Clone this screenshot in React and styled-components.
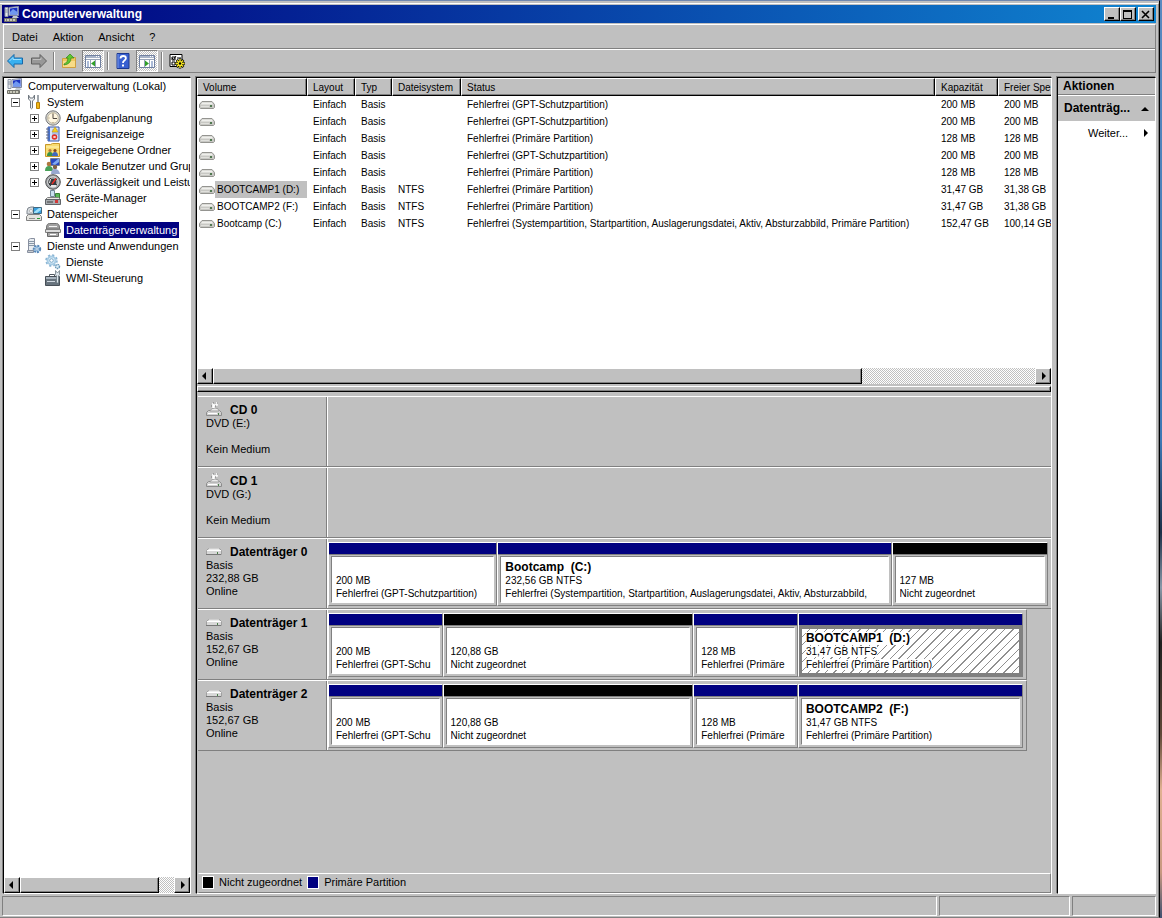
import React, { useState } from "react";
import styled, { createGlobalStyle, css } from "styled-components";

const FACE = "#c0c0c0";
const SHADOW = "#808080";
const LIGHT = "#ffffff";
const NAVY = "#000080";
const BLACK = "#000000";
const FONT = `"Liberation Sans", Arial, sans-serif`;

const dither = css`
  background: repeating-conic-gradient(${FACE} 0% 25%, ${LIGHT} 0% 50%) 0 0 / 2px 2px;
`;

const raised = css`
  border: 1px solid;
  border-color: ${LIGHT} ${BLACK} ${BLACK} ${LIGHT};
  box-shadow: inset -1px -1px 0 ${SHADOW};
`;

const GlobalStyle = createGlobalStyle`
  * { box-sizing: border-box; }
  body {
    margin: 0;
    font: 11px/13px ${FONT};
    color: ${BLACK};
    background: linear-gradient(#5a8ac0 0%, #3e78b4 48%, #1c3048 58%, #8a98a8 64%, #202020 70%, #604838 80%, #e0b090 86%, #c89880 95%, #405070 100%);
  }
  button { font: inherit; color: inherit; padding: 0; }
`;

const Window = styled.div`
  display: flex;
  flex-direction: column;
  height: 100vh;
  min-height: 600px;
  margin-right: 2px;
  border-top: 1px solid #7088b0;
  border-right: 1px solid ${BLACK};
  border-bottom: 1px solid ${SHADOW};
  background: ${FACE};
`;

const Frame = styled.div`
  display: flex;
  flex-direction: column;
  flex: 1;
  min-height: 0;
  margin-top: 2px;
  padding: 1px 2px 1px 2px;
  border-top: 1px solid ${LIGHT};
  border-right: 1px solid ${SHADOW};
`;

const TitleBar = styled.header`
  display: flex;
  align-items: center;
  gap: 2px;
  height: 18px;
  padding: 0 2px;
  color: ${LIGHT};
  background: linear-gradient(90deg, #00007f, #1084d0);
`;

const Title = styled.h1`
  flex: 1;
  margin: 0;
  font-size: 12px;
`;

const CaptionButton = styled.button`
  ${raised}
  display: grid;
  place-items: center;
  width: 16px;
  height: 14px;
  margin-left: ${p => (p.$spaced ? "0" : "-2px")};
  background: ${FACE};
`;

const Bars = styled.div`
  margin: 1px 0 3px 1px;
  border: 1px solid;
  border-color: ${LIGHT} ${SHADOW} ${SHADOW} ${LIGHT};
`;

const MenuBar = styled.nav`
  display: flex;
  align-items: center;
  gap: 15px;
  height: 24px;
  padding: 1px 0 0 8px;
  border-bottom: 1px solid ${SHADOW};

  button {
    border: 0;
    background: none;
  }
`;

const ToolBar = styled.div`
  display: flex;
  align-items: center;
  gap: 2px;
  height: 23px;
  border-top: 1px solid ${LIGHT};
`;

const ToolButton = styled.button`
  display: grid;
  place-items: center;
  width: 22px;
  height: 22px;
  border: 1px solid transparent;
  background: none;
  ${p =>
    p.$pressed &&
    css`
      ${dither}
      border-color: ${SHADOW} ${LIGHT} ${LIGHT} ${SHADOW};
    `}
`;

const Separator = styled.span`
  width: 2px;
  height: 18px;
  margin: 0 1px;
  border-left: 1px solid ${SHADOW};
  border-right: 1px solid ${LIGHT};
`;

const Panes = styled.div`
  display: flex;
  flex: 1;
  gap: 5px;
  min-height: 0;
  padding: 1px 0 0 1px;
`;

const Pane = styled.section`
  display: flex;
  flex-direction: column;
  min-width: 0;
  border: 1px solid;
  border-color: ${BLACK} ${LIGHT} ${LIGHT} ${BLACK};
  box-shadow: -1px -1px 0 ${SHADOW};
  background: ${LIGHT};
`;

const TreePane = styled(Pane)`
  flex: 0 0 188px;
`;

const MainPane = styled(Pane)`
  flex: 1;
  background: ${FACE};
`;

const ActionPane = styled(Pane)`
  flex: 0 0 99px;
`;

const Tree = styled.ul`
  flex: 1;
  margin: 0;
  padding: 0;
  overflow: hidden;
  list-style: none;
`;

const treeIndent = ["3px", "7px", "26px"];

const TreeRow = styled.li`
  display: flex;
  align-items: center;
  height: 16px;
  padding-left: ${p => treeIndent[p.$level]};
  white-space: nowrap;

  svg {
    flex: none;
  }
`;

const Expander = styled.button`
  flex: none;
  display: grid;
  place-items: center;
  width: 9px;
  height: 9px;
  margin-right: 6px;
  border: 1px solid ${SHADOW};
  background: ${LIGHT};
`;

const NoExpander = styled.span`
  flex: none;
  width: 15px;
`;

const TreeLabel = styled.button`
  height: 16px;
  margin-left: 3px;
  padding: 0 2px;
  border: 0;
  color: ${p => (p.$selected ? LIGHT : BLACK)};
  background: ${p => (p.$selected ? NAVY : "none")};
`;

const ScrollBar = styled.div`
  ${dither}
  flex: none;
  display: flex;
  height: 16px;
`;

const ScrollButton = styled.button`
  ${raised}
  display: grid;
  place-items: center;
  width: 16px;
  background: ${FACE};
`;

const ScrollTrack = styled.div`
  flex: 1;
`;

const ScrollThumb = styled.div`
  ${raised}
  width: ${p => p.$size};
  height: 100%;
  background: ${FACE};
`;

const VolumeArea = styled.div`
  flex: 0 0 290px;
  overflow: hidden;
  background: ${LIGHT};
`;

const VolumeTable = styled.table`
  width: 891px;
  table-layout: fixed;
  border-collapse: separate;
  border-spacing: 0;
`;

const ColumnHead = styled.th`
  width: ${p => p.$width}px;
  height: 18px;
  padding: 0 0 0 5px;
  border: 1px solid;
  border-color: ${LIGHT} ${BLACK} ${BLACK} ${LIGHT};
  box-shadow: inset -1px -1px 0 ${SHADOW};
  background: ${FACE};
  font-size: 10px;
  font-weight: 400;
  text-align: left;
`;

const Cell = styled.td`
  height: 17px;
  padding: 0 0 0 6px;
  overflow: hidden;
  font-size: 10px;
  white-space: nowrap;
`;

const NameCell = styled(Cell)`
  padding-left: 2px;
`;

const VolumeName = styled.div`
  display: flex;
  align-items: center;
  height: 17px;

  span {
    flex: 1;
    padding-left: 2px;
    line-height: 17px;
    background: ${p => (p.$selected ? FACE : "none")};
  }
`;

const Splitter = styled.div`
  ${raised}
  flex: none;
  height: 6px;
  margin: 2px 0 4px;
`;

const Disks = styled.div`
  flex: 1;
  min-height: 0;
  margin-left: 1px;
  overflow: hidden;
`;

const DiskRow = styled.article`
  display: flex;
  height: 71px;
  width: ${p => (p.$short ? "calc(100% - 24px)" : "100%")};
  border-top: 1px solid ${LIGHT};
  border-bottom: 1px solid ${SHADOW};
  border-right: ${p => (p.$short ? `1px solid ${SHADOW}` : "0")};
`;

const DiskInfo = styled.div`
  flex: 0 0 129px;
  padding: 6px 0 0 8px;
  border-right: 1px solid ${SHADOW};
`;

const DiskTitle = styled.h2`
  display: flex;
  align-items: center;
  gap: 8px;
  height: 14px;
  margin: 0;
  font-size: 12px;
`;

const Line = styled.p`
  min-height: 13px;
  margin: 0;
`;

const Partitions = styled.div`
  display: flex;
  flex: 1;
  min-width: 0;
  padding: 3px 3px 2px 0;
  border-left: 1px solid ${LIGHT};
`;

const Partition = styled.div`
  display: flex;
  flex-direction: column;
  flex: ${p => p.$share} 0 0;
  min-width: 0;
  border: 1px solid;
  border-color: ${LIGHT} ${SHADOW} ${SHADOW} ${LIGHT};
`;

const PartitionBar = styled.div`
  height: 12px;
  border-bottom: 1px solid ${SHADOW};
  background: ${p => (p.$free ? BLACK : NAVY)};
`;

const PartitionBody = styled.div`
  flex: 1;
  min-height: 0;
  margin: ${p => (p.$selected ? "0" : "1px 2px 2px 2px")};
  padding: ${p => (p.$selected ? "3px 0 0 4px" : "4px 4px 0 4px")};
  overflow: hidden;
  font-size: 10px;
  white-space: nowrap;
  border: 1px solid;
  border-color: ${SHADOW} ${LIGHT} ${LIGHT} ${SHADOW};
  background: ${LIGHT};
  ${p =>
    p.$selected &&
    css`
      border: 3px solid ${SHADOW};
      background: repeating-linear-gradient(135deg, ${LIGHT} 0 5px, #909090 5px 6px);
    `}

  p {
    overflow: hidden;
  }

  span {
    background: ${LIGHT};
  }
`;

const PartitionName = styled(Line)`
  font-size: 12px;
  font-weight: 700;
  white-space: pre;
`;

const Legend = styled.footer`
  flex: none;
  display: flex;
  align-items: center;
  gap: 5px;
  height: 20px;
  margin-left: 1px;
  padding: 0 0 1px 3px;
  border: 1px solid;
  border-color: ${LIGHT} ${SHADOW} ${SHADOW} ${FACE};
`;

const Swatch = styled.i`
  width: 12px;
  height: 13px;
  border: 1px solid ${LIGHT};
  background: ${p => p.$color};
`;

const ActionHeading = styled.h2`
  height: 17px;
  margin: 0;
  padding-left: 5px;
  border-bottom: 1px solid ${SHADOW};
  font-size: 12px;
  line-height: 17px;
  background: ${FACE};
`;

const ActionGroup = styled.button`
  display: flex;
  align-items: center;
  justify-content: space-between;
  height: 25px;
  margin-top: 1px;
  padding: 0 6px;
  border: 0;
  font-size: 12px;
  font-weight: 700;
  background: ${FACE};
`;

const ActionItem = styled.button`
  display: flex;
  align-items: center;
  justify-content: space-between;
  height: 24px;
  padding: 0 6px 0 30px;
  border: 0;
  background: none;
`;

const StatusBar = styled.footer`
  display: grid;
  grid-template-columns: 1fr 131px 84px;
  gap: 2px;
  height: 20px;
  margin-top: 2px;

  span {
    border: 1px solid;
    border-color: ${SHADOW} ${LIGHT} ${LIGHT} ${SHADOW};
  }
`;

const Svg = ({ children }) => (
  <svg width="16" height="16" viewBox="0 0 16 16" aria-hidden="true">
    {children}
  </svg>
);

const ComputerIcon = () => (
  <Svg>
    <path d="M1 1.500h3v9H1z" fill="#e4e8ec" stroke="#9098a8" />
    <path d="M1 4h3M1 6h3" stroke="#8890a0" />
    <path d="M5 1.500L14.500 .500v9L5 9.500z" fill="#e8ecf4" stroke="#8088a0" />
    <path d="M6 2.500l7.500-1v7H6z" fill="#1c34c0" />
    <path d="M6 8.500V6l3-3 4.500 3v2.500z" fill="#7098f0" />
    <path d="M9 10h4l2 2H8z" fill="#c0c8d4" />
    <path d="M.5 12.500h12v3H.5z" fill="#c8c8b8" stroke="#707068" />
    <path d="M2 14h1M5 14h1M8 14h1M11 14h1" stroke="#383838" />
  </Svg>
);

const ToolsIcon = () => (
  <Svg>
    <path d="M2.500 1v4l2 2v7q1 1.500 2 0V7l2-2V1L7 4H4z" fill="#f0f2f4" stroke="#707880" />
    <path d="M12 1v7" stroke="#808890" strokeWidth="1.500" />
    <path d="M10.500 8.500h3v6h-3z" fill="#f0b818" stroke="#b88008" />
  </Svg>
);

const ClockIcon = () => (
  <Svg>
    <circle cx="8" cy="8" r="7.200" fill="#d8d8d4" stroke="#787878" />
    <circle cx="8" cy="8" r="5.300" fill="#fff6e0" stroke="#c0b8a0" />
    <path d="M8 4v4.500h4" fill="none" stroke="#504840" />
    <path d="M8 3v1M8 12v1M3.500 8h1" stroke="#a09070" />
  </Svg>
);

const EventIcon = () => (
  <Svg>
    <path d="M3 1h11v14H3z" fill="#d8e4f8" stroke="#3858a8" />
    <path d="M3 1h2v14H3z" fill="#4870c8" />
    <path d="M1 3h3M1 6h3M1 9h3M1 12h3" stroke="#606880" />
    <path d="M7 4h6M7 6h6M7 8h6" stroke="#88a0d0" />
    <path d="M10 1l3 5H7z" fill="#f8d020" stroke="#b89010" strokeWidth=".5" />
    <circle cx="9.500" cy="11" r="2.800" fill="#e03028" />
    <path d="M8.500 10l2 2m0-2l-2 2" stroke="#fff" />
  </Svg>
);

const SharedFolderIcon = () => (
  <Svg>
    <path d="M.5 2.500h5l2-1h7v13H.5z" fill="#f8dc70" stroke="#c89828" />
    <path d="M1 5h13" stroke="#fff4b8" />
    <circle cx="5" cy="8.500" r="1.600" fill="#b87838" />
    <path d="M2 14q0-4 3-4t3 4z" fill="#389048" />
    <circle cx="10" cy="8.500" r="1.600" fill="#804820" />
    <path d="M7 14q0-4 3-4t3 4z" fill="#4068c0" />
  </Svg>
);

const UsersIcon = () => (
  <Svg>
    <path d="M5.500 .5h9v7h-9z" fill="#d8dce4" stroke="#788090" />
    <path d="M6 1h8v6H6z" fill="#2848c0" />
    <path d="M7 6l6-5h1v3l-4 3z" fill="#80a8f0" />
    <circle cx="4" cy="6" r="2.300" fill="#b07840" />
    <path d="M0 13q0-5 4-5t4 5z" fill="#48a058" />
    <circle cx="10" cy="9" r="2.200" fill="#806048" />
    <path d="M6 16q0-5 4-5t5 5z" fill="#98a8d0" />
  </Svg>
);

const GaugeIcon = () => (
  <Svg>
    <circle cx="8" cy="8" r="7.300" fill="#a0a4a8" stroke="#505050" />
    <circle cx="8" cy="8" r="5.300" fill="#383c40" stroke="#e0e0e0" />
    <path d="M4.500 9l1-4M6 4h4M12 6v4" stroke="#f0f0f0" />
    <path d="M11 4.500L7 10" stroke="#e83028" strokeWidth="1.500" />
    <path d="M6 11h5v2H6z" fill="#e8e8e8" />
  </Svg>
);

const DeviceIcon = () => (
  <Svg>
    <path d="M5.500 .5h4v6h-4z" fill="#c8e0f0" stroke="#708898" />
    <path d="M10.500 3.500h4v5h-4z" fill="#58b858" stroke="#388038" />
    <path d="M.5 9.500l2-2h11l2 2z" fill="#e8e8e4" stroke="#808080" />
    <path d="M.5 9.500h15v5H.5z" fill="#a8acb0" stroke="#606468" />
    <path d="M2 12h6" stroke="#404040" />
    <path d="M10 10h3v3h-3z" fill="#d03838" />
  </Svg>
);

const StorageIcon = () => (
  <Svg>
    <path d="M1 5q0-4 4-4h3v7H1z" fill="#d8dce0" stroke="#808890" />
    <circle cx="5" cy="5" r="1.500" fill="#fff" stroke="#888" strokeWidth=".5" />
    <path d="M7.500 1.500h8v6h-8z" fill="#38a0e0" stroke="#406880" />
    <path d="M8 6l5-4h2v2l-4 3H8z" fill="#a0e0f8" />
    <path d="M.5 10.500l2-2h11l2 2v4H.5z" fill="#e4e4e0" stroke="#808080" />
    <path d="M3 12.500h6" stroke="#909090" />
    <path d="M11 12.500h3" stroke="#289838" />
  </Svg>
);

const DiskManagementIcon = () => (
  <Svg>
    <path d="M1.500 6q0-4.500 3-4.500h7q3 0 3 4.500v1h-13z" fill="#a0a0a0" stroke="#707070" />
    <path d="M4 4.500h8" stroke="#f4f4f4" />
    <path d="M.5 7.500h15v3H.5z" fill="#dcdcdc" stroke="#808080" />
    <path d="M2.500 10.500h11v4h-11z" fill="#a8a8a8" stroke="#686868" />
    <path d="M5 12.500h6" stroke="#fff" />
  </Svg>
);

const ServicesAppsIcon = () => (
  <Svg>
    <path d="M2.500 1.500l2-1h4v12h-6z" fill="#e8ecf0" stroke="#8890a0" />
    <path d="M3 3.500h5M3 5.500h5M3 7.500h5" stroke="#8898a8" />
    <path d="M1.500 12.500h6v2h-6z" fill="#c8ccd0" stroke="#8890a0" />
    <circle cx="11" cy="11" r="3.200" fill="#b8d8f0" stroke="#5888b8" strokeWidth="2" strokeDasharray="2 1" />
    <circle cx="11" cy="11" r="1.300" fill="#fff" stroke="#5888b8" strokeWidth=".7" />
  </Svg>
);

const ServicesIcon = () => (
  <Svg>
    <circle cx="6.500" cy="6.500" r="4" fill="#e0f0fa" stroke="#a8cce4" strokeWidth="2" />
    <circle cx="6.500" cy="6.500" r="5.500" fill="none" stroke="#88b4d4" strokeWidth="1.500" strokeDasharray="2.200 2.120" />
    <circle cx="6.500" cy="6.500" r="1.800" fill="#fff" stroke="#78a8c8" />
    <circle cx="12.500" cy="12.500" r="2" fill="#e0f0fa" stroke="#6898b8" strokeWidth="1.500" strokeDasharray="1.500 .6" />
  </Svg>
);

const WmiIcon = () => (
  <Svg>
    <path d="M4.500 6V4.500h5v2" fill="none" stroke="#505860" />
    <path d="M.5 6.500h14v9H.5z" fill="#68747e" stroke="#485058" />
    <path d="M1 7h13v2H1z" fill="#a8b4be" />
    <path d="M2 11.500h8" stroke="#d0d8e0" />
    <path d="M10.500 .5v4l1 1.500v7h2V6l1-1.500v-4l-2 2.500z" fill="#dce4ea" stroke="#607078" strokeWidth=".7" />
  </Svg>
);

const DriveIcon = () => (
  <Svg>
    <path d="M.5 7.500L3 4.500h10l2.500 3v3l-1 1h-13l-1-1z" fill="#c8c8c4" stroke="#949490" />
    <path d="M3 5.500h10l1 2H2z" fill="#efefec" />
    <path d="M2 9.500h8" stroke="#e0e0dc" />
    <path d="M11 8h2v2h-2z" fill="#507850" />
  </Svg>
);

const SmallDriveIcon = () => (
  <Svg>
    <path d="M.5 6.500l2-2h11l2 2v4H.5z" fill="#d8d8d8" stroke="#a0a0a0" />
    <path d="M1 6.500h14M3 5h10" stroke="#fff" />
    <path d="M0 10.500h15" stroke="#787878" />
    <path d="M11.500 8v2" stroke="#488048" />
  </Svg>
);

const OpticalIcon = () => (
  <Svg>
    <path d="M.5 10.500l2-2h11l2 2v3H.5z" fill="#d0d0d0" stroke="#8c8c8c" />
    <path d="M2 11.500h9" stroke="#fff" />
    <path d="M4 9q1-3 5-3t4 3z" fill="#ececec" stroke="#a0a0a0" />
    <path d="M7 1v5M8 6V3h3V0" fill="none" stroke="#fff" strokeWidth="1.500" />
    <path d="M7 1h1M11 1h1M9 4h1M5 4h1" stroke="#707070" />
    <path d="M12.500 11v2" stroke="#488048" />
  </Svg>
);

const ArrowIcon = ({ forward }) => (
  <Svg>
    <path
      d={forward ? "M15.500 8L9 1.500v3.500H.5v6H9v3.500z" : "M.5 8L7 1.500v3.500h8.500v6H7v3.500z"}
      fill={forward ? "#989898" : "#38b0f0"}
      stroke={forward ? "#606060" : "#1868a8"}
    />
    <path
      d={forward ? "M2 6.500h8V4.500" : "M2.500 8L6 4.500v2h8"}
      fill="none"
      stroke={forward ? "#c0c0c0" : "#a0e0ff"}
    />
  </Svg>
);

const FolderUpIcon = () => (
  <Svg>
    <path d="M1.500 5.500h5l1-1h7v10h-13z" fill="#f0c860" stroke="#d0a040" />
    <path d="M2 8h12v6H2z" fill="#f8dc88" />
    <path d="M3 11q4-1 4-6H5l4-4 4 4h-3q0 6-7 7z" fill="#60c830" stroke="#308818" strokeWidth=".7" />
  </Svg>
);

const PaneIcon = ({ right }) => (
  <Svg>
    <path d="M.5 2.500h15v12H.5z" fill="#fff" stroke="#7080a0" />
    <path d="M1 4h14" stroke="#a8b4c8" strokeWidth="2" />
    <path d="M11 3.500h1M13 3.500h1" stroke="#fff" />
    <path d="M1 6.500h14M5.500 7v7M10.500 7v7" stroke="#98a4b8" />
    <path d={right ? "M12 9h2M12 11h2M12 13h2" : "M2 9h2M2 11h2M2 13h2"} stroke="#5878b0" />
    <path d={right ? "M6 7.500l4 3-4 3z" : "M10 7.500l-4 3 4 3z"} fill="#30a028" />
  </Svg>
);

const HelpIcon = () => (
  <Svg>
    <path d="M2 .5h12v15H2z" fill="#3860d0" stroke="#1c3890" />
    <path d="M3 1v14" stroke="#7898e8" />
    <path d="M5.500 5.500q0-2.500 2.700-2.500t2.700 2.300q0 1.200-1.500 2.100T8 10" fill="none" stroke="#fff" strokeWidth="1.800" />
    <path d="M7 11.500h2v2H7z" fill="#fff" />
  </Svg>
);

const SettingsIcon = () => (
  <Svg>
    <path d="M1 1.500h12v12H1z" fill="#fff" stroke="#000" />
    <path d="M3 4h3v3H3zM3 9h3v3H3z" fill="#fff" stroke="#000" />
    <path d="M3 5l1.500 1.500L7 3M8 5h4M8 10h2" fill="none" stroke="#000" />
    <path d="M11 5.500v10M6 10.500h10M7.500 7l7 7M14.500 7l-7 7" stroke="#000" strokeWidth="2.500" />
    <path d="M11 6v9M6.500 10.500h9M8 7.500l6 6M14 7.500l-6 6" stroke="#f8e820" strokeWidth="1.500" />
    <circle cx="11" cy="10.500" r="1.200" fill="#000" />
  </Svg>
);

const Triangle = ({ dir }) => {
  const paths = {
    left: "M5 0v8L1 4z",
    right: "M3 0v8l4-4z",
    up: "M0 6h8L4 2z"
  };
  return (
    <svg width="8" height="8" viewBox="0 0 8 8" aria-hidden="true">
      <path d={paths[dir]} />
    </svg>
  );
};

const tree = [
  { level: 0, label: "Computerverwaltung (Lokal)", Icon: ComputerIcon },
  { level: 1, label: "System", Icon: ToolsIcon, sign: "-" },
  { level: 2, label: "Aufgabenplanung", Icon: ClockIcon, sign: "+" },
  { level: 2, label: "Ereignisanzeige", Icon: EventIcon, sign: "+" },
  { level: 2, label: "Freigegebene Ordner", Icon: SharedFolderIcon, sign: "+" },
  { level: 2, label: "Lokale Benutzer und Grup", Icon: UsersIcon, sign: "+" },
  { level: 2, label: "Zuverlässigkeit und Leistu", Icon: GaugeIcon, sign: "+" },
  { level: 2, label: "Geräte-Manager", Icon: DeviceIcon },
  { level: 1, label: "Datenspeicher", Icon: StorageIcon, sign: "-" },
  { level: 2, label: "Datenträgerverwaltung", Icon: DiskManagementIcon },
  { level: 1, label: "Dienste und Anwendungen", Icon: ServicesAppsIcon, sign: "-" },
  { level: 2, label: "Dienste", Icon: ServicesIcon },
  { level: 2, label: "WMI-Steuerung", Icon: WmiIcon }
];

const columns = [
  ["Volume", 110],
  ["Layout", 48],
  ["Typ", 37],
  ["Dateisystem", 69],
  ["Status", 474],
  ["Kapazität", 63],
  ["Freier Spe", 90]
];

const GPT = "Fehlerfrei (GPT-Schutzpartition)";
const PRIMARY = "Fehlerfrei (Primäre Partition)";
const SYSTEM_SHORT =
  "Fehlerfrei (Systempartition, Startpartition, Auslagerungsdatei, Aktiv, Absturzabbild,";
const SYSTEM = `${SYSTEM_SHORT} Primäre Partition)`;

const volumes = [
  ["", "", GPT, "200 MB", "200 MB"],
  ["", "", GPT, "200 MB", "200 MB"],
  ["", "", PRIMARY, "128 MB", "128 MB"],
  ["", "", GPT, "200 MB", "200 MB"],
  ["", "", PRIMARY, "128 MB", "128 MB"],
  ["BOOTCAMP1 (D:)", "NTFS", PRIMARY, "31,47 GB", "31,38 GB"],
  ["BOOTCAMP2 (F:)", "NTFS", PRIMARY, "31,47 GB", "31,38 GB"],
  ["Bootcamp (C:)", "NTFS", SYSTEM, "152,47 GB", "100,14 GB"]
];

const smallDisk = (name, selected) => [
  { share: 114, size: "200 MB", status: "Fehlerfrei (GPT-Schu" },
  { share: 252, size: "120,88 GB", status: "Nicht zugeordnet", free: true },
  { share: 104, size: "128 MB", status: "Fehlerfrei (Primäre" },
  { share: 226, name, size: "31,47 GB NTFS", status: PRIMARY, selected }
];

const disks = [
  { title: "CD 0", lines: ["DVD (E:)", "", "Kein Medium"], Icon: OpticalIcon },
  { title: "CD 1", lines: ["DVD (G:)", "", "Kein Medium"], Icon: OpticalIcon },
  {
    title: "Datenträger 0",
    lines: ["Basis", "232,88 GB", "Online"],
    Icon: SmallDriveIcon,
    partitions: [
      { share: 169, size: "200 MB", status: GPT },
      { share: 396, name: "Bootcamp  (C:)", size: "232,56 GB NTFS", status: SYSTEM_SHORT },
      { share: 156, size: "127 MB", status: "Nicht zugeordnet", free: true }
    ]
  },
  {
    title: "Datenträger 1",
    lines: ["Basis", "152,67 GB", "Online"],
    Icon: SmallDriveIcon,
    short: true,
    partitions: smallDisk("BOOTCAMP1  (D:)", true)
  },
  {
    title: "Datenträger 2",
    lines: ["Basis", "152,67 GB", "Online"],
    Icon: SmallDriveIcon,
    short: true,
    partitions: smallDisk("BOOTCAMP2  (F:)", false)
  }
];

const HorizontalScroll = ({ size }) => (
  <ScrollBar>
    <ScrollButton aria-label="Nach links">
      <Triangle dir="left" />
    </ScrollButton>
    <ScrollTrack>
      <ScrollThumb $size={size} />
    </ScrollTrack>
    <ScrollButton aria-label="Nach rechts">
      <Triangle dir="right" />
    </ScrollButton>
  </ScrollBar>
);

const Disk = ({ title, lines, Icon, short, partitions = [] }) => (
  <DiskRow $short={short}>
    <DiskInfo>
      <DiskTitle>
        <Icon />
        {title}
      </DiskTitle>
      {lines.map((line, i) => (
        <Line key={i}>{line}</Line>
      ))}
    </DiskInfo>
    <Partitions>
      {partitions.map((part, i) => (
        <Partition key={i} $share={part.share}>
          <PartitionBar $free={part.free} />
          <PartitionBody $selected={part.selected}>
            <PartitionName>
              <span>{part.name}</span>
            </PartitionName>
            <Line>
              <span>{part.size}</span>
            </Line>
            <Line>
              <span>{part.status}</span>
            </Line>
          </PartitionBody>
        </Partition>
      ))}
    </Partitions>
  </DiskRow>
);

export default function App() {
  const [node, setNode] = useState("Datenträgerverwaltung");
  const [volume, setVolume] = useState(5);

  return (
    <>
      <GlobalStyle />
      <Window>
        <Frame>
          <TitleBar>
            <ComputerIcon />
            <Title>Computerverwaltung</Title>
            <CaptionButton aria-label="Minimieren" $spaced>
              <svg width="10" height="9" viewBox="0 0 10 9">
                <path d="M1 7h6v2H1z" />
              </svg>
            </CaptionButton>
            <CaptionButton aria-label="Maximieren">
              <svg width="10" height="9" viewBox="0 0 10 9">
                <path d="M0 0h9v9H0zM1 2v6h7V2z" fillRule="evenodd" />
              </svg>
            </CaptionButton>
            <CaptionButton aria-label="Schließen" $spaced>
              <svg width="10" height="9" viewBox="0 0 10 9">
                <path d="M1 1l7 7M8 1L1 8" stroke="#000" strokeWidth="1.600" />
              </svg>
            </CaptionButton>
          </TitleBar>
          <Bars>
            <MenuBar>
              <button>Datei</button>
              <button>Aktion</button>
              <button>Ansicht</button>
              <button>?</button>
            </MenuBar>
            <ToolBar>
              <ToolButton aria-label="Zurück">
                <ArrowIcon />
              </ToolButton>
              <ToolButton aria-label="Vorwärts">
                <ArrowIcon forward />
              </ToolButton>
              <Separator />
              <ToolButton aria-label="Aufwärts">
                <FolderUpIcon />
              </ToolButton>
              <ToolButton aria-label="Konsolenstruktur" $pressed>
                <PaneIcon />
              </ToolButton>
              <Separator />
              <ToolButton aria-label="Hilfe">
                <HelpIcon />
              </ToolButton>
              <ToolButton aria-label="Aktionsbereich" $pressed>
                <PaneIcon right />
              </ToolButton>
              <Separator />
              <ToolButton aria-label="Einstellungen">
                <SettingsIcon />
              </ToolButton>
            </ToolBar>
          </Bars>
          <Panes>
            <TreePane>
              <Tree>
                {tree.map(({ level, label, Icon, sign }) => (
                  <TreeRow key={label} $level={level}>
                    {sign && (
                      <Expander aria-label={label}>
                        <svg width="7" height="7" viewBox="0 0 7 7">
                          <path d={sign === "+" ? "M1 3.500h5M3.500 1v5" : "M1 3.500h5"} stroke="#000" />
                        </svg>
                      </Expander>
                    )}
                    {!sign && level > 0 && <NoExpander />}
                    <Icon />
                    <TreeLabel $selected={label === node} onClick={() => setNode(label)}>
                      {label}
                    </TreeLabel>
                  </TreeRow>
                ))}
              </Tree>
              <HorizontalScroll size="90%" />
            </TreePane>
            <MainPane>
              <VolumeArea>
                <VolumeTable>
                  <thead>
                    <tr>
                      {columns.map(([name, width]) => (
                        <ColumnHead key={name} $width={width}>
                          {name}
                        </ColumnHead>
                      ))}
                    </tr>
                  </thead>
                  <tbody>
                    {volumes.map(([name, fs, status, size, free], i) => (
                      <tr key={i} onClick={() => setVolume(i)}>
                        <NameCell>
                          <VolumeName $selected={i === volume}>
                            <DriveIcon />
                            <span>{name}</span>
                          </VolumeName>
                        </NameCell>
                        <Cell>Einfach</Cell>
                        <Cell>Basis</Cell>
                        <Cell>{fs}</Cell>
                        <Cell>{status}</Cell>
                        <Cell>{size}</Cell>
                        <Cell>{free}</Cell>
                      </tr>
                    ))}
                  </tbody>
                </VolumeTable>
              </VolumeArea>
              <HorizontalScroll size="79%" />
              <Splitter />
              <Disks>
                {disks.map(disk => (
                  <Disk key={disk.title} {...disk} />
                ))}
              </Disks>
              <Legend>
                <Swatch $color={BLACK} />
                Nicht zugeordnet
                <Swatch $color={NAVY} />
                Primäre Partition
              </Legend>
            </MainPane>
            <ActionPane>
              <ActionHeading>Aktionen</ActionHeading>
              <ActionGroup>
                Datenträg...
                <Triangle dir="up" />
              </ActionGroup>
              <ActionItem>
                Weiter...
                <Triangle dir="right" />
              </ActionItem>
            </ActionPane>
          </Panes>
          <StatusBar>
            <span />
            <span />
            <span />
          </StatusBar>
        </Frame>
      </Window>
    </>
  );
}
